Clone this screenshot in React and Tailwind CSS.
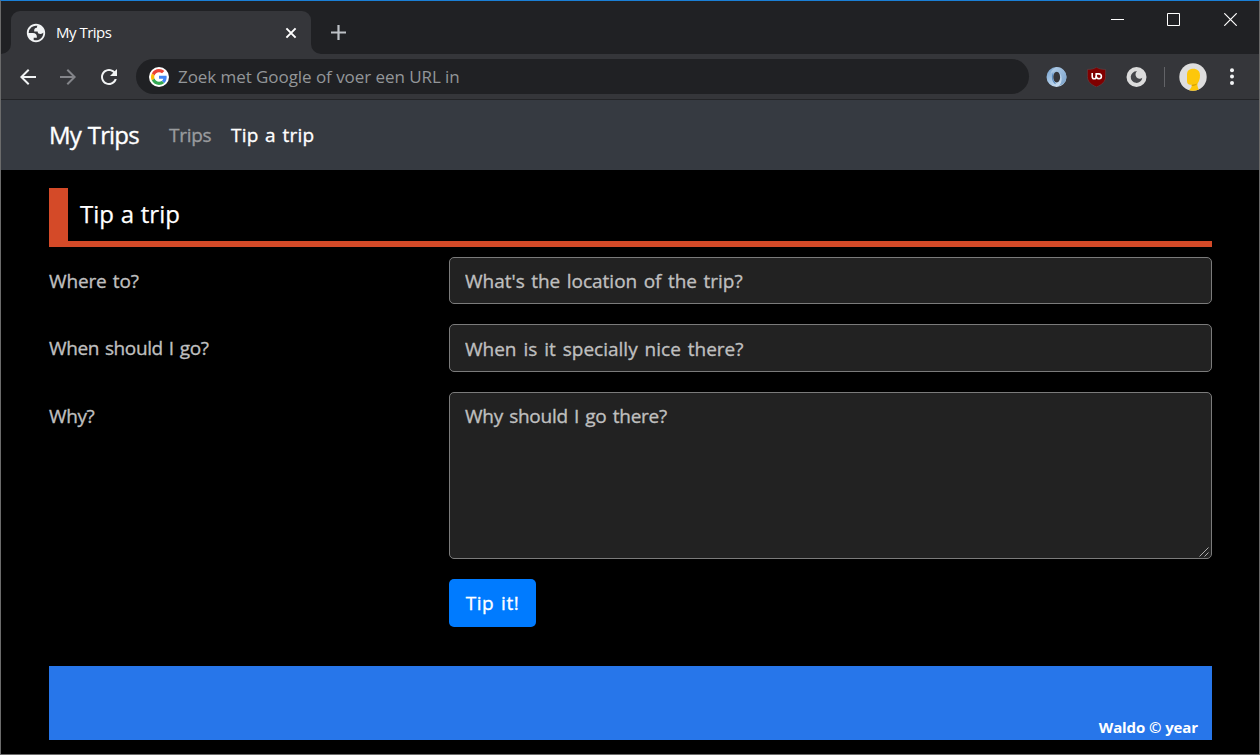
const GLOBE =
  'M12 2c5.520 0 10 4.480 10 10s-4.480 10-10 10S2 17.520 2 12 6.480 2 12 2zM4 12h4.400c3.407.022 4.922 1.730 4.543 5.127H9.488v2.470a8.004 8.004 0 0 0 10.498-8.083C19.327 12.504 18.332 13 17 13c-2.137 0-3.206-.916-3.206-2.750h-3.748c-.274-2.728.683-4.092 2.870-4.092 0-.975.327-1.597.811-1.970A8.004 8.004 0 0 0 4 12z';

function TabStrip() {
  return (
    <div className="flex h-[53px] items-end bg-[#202124]">
      <svg className="h-2.5 w-2.5" viewBox="0 0 10 10">
        <path d="M10 0V10H0A10 10 0 0 0 10 0Z" fill="#35363a" />
      </svg>
      <div className="flex h-[43px] w-[300px] items-center rounded-t-[9px] bg-[#35363a] pr-3.5 pl-3.5">
        <svg className="size-[22px]" viewBox="0 0 24 24" fill="#f1f3f4">
          <path fillRule="evenodd" d={GLOBE} />
        </svg>
        <span className="ml-[9px] flex-1 font-['Open_Sans',sans-serif] text-[15px] tracking-[-0.5px] text-white">My Trips</span>
        <svg className="size-3" viewBox="0 0 12 12" stroke="#fff" strokeWidth="2">
          <path d="M1.400 1.400 10.600 10.600M10.600 1.400 1.400 10.600" />
        </svg>
      </div>
      <svg className="h-2.5 w-2.5" viewBox="0 0 10 10">
        <path d="M0 0V10H10A10 10 0 0 1 0 0Z" fill="#35363a" />
      </svg>
      <svg className="mb-3.5 ml-[10px] size-[15px]" viewBox="0 0 15 15" stroke="#bdc1c6" strokeWidth="2.2">
        <path d="M7.500 0V15M0 7.500H15" />
      </svg>
      <div className="ml-auto flex h-full items-start pt-3 pr-[22px]">
        <svg className="mr-[43px] size-[13px]" viewBox="0 0 13 13" fill="none" stroke="#fff">
          <path d="M0 6.500H13" />
        </svg>
        <svg className="mr-[44px] size-[13px]" viewBox="0 0 13 13" fill="none" stroke="#fff">
          <path d="M.5 .5H12.500V12.500H.5Z" />
        </svg>
        <svg className="size-[13px]" viewBox="0 0 13 13" fill="none" stroke="#fff" strokeWidth="1.2">
          <path d="M.3 .3 12.700 12.700M12.700 .3 .3 12.700" />
        </svg>
      </div>
    </div>
  );
}

function GoogleMark() {
  return (
    <span className="flex size-5 items-center justify-center rounded-full bg-white">
      <svg className="size-4" viewBox="0 0 48 48">
        <path fill="#EA4335" d="M24 9.5c3.54 0 6.71 1.22 9.21 3.6l6.85-6.85C35.9 2.38 30.47 0 24 0 14.62 0 6.51 5.38 2.56 13.22l7.98 6.19C12.43 13.72 17.74 9.5 24 9.5z" />
        <path fill="#4285F4" d="M46.98 24.55c0-1.57-.15-3.09-.38-4.55H24v9.02h12.94c-.58 2.96-2.26 5.48-4.78 7.18l7.73 6c4.51-4.18 7.09-10.36 7.09-17.65z" />
        <path fill="#FBBC05" d="M10.53 28.59c-.48-1.45-.76-2.99-.76-4.59s.27-3.14.76-4.59l-7.98-6.19C.92 16.46 0 20.12 0 24c0 3.88.92 7.54 2.56 10.78l7.97-6.19z" />
        <path fill="#34A853" d="M24 48c6.48 0 11.93-2.13 15.89-5.81l-7.73-6c-2.15 1.45-4.92 2.3-8.16 2.3-6.26 0-11.57-4.22-13.47-9.91l-7.98 6.19C6.51 42.62 14.62 48 24 48z" />
      </svg>
    </span>
  );
}

function Toolbar() {
  return (
    <div className="flex h-[46px] items-center border-b border-[#232427] bg-[#35363a] pl-[15px]">
      <svg className="size-6" viewBox="0 0 24 24" fill="#f1f3f4">
        <path d="M20 11H7.83l5.59-5.59L12 4l-8 8 8 8 1.41-1.41L7.83 13H20v-2z" />
      </svg>
      <svg className="ml-4 size-6" viewBox="0 0 24 24" fill="#84858a">
        <path d="m12 4-1.410 1.410L16.170 11H4v2h12.170l-5.580 5.590L12 20l8-8z" />
      </svg>
      <svg className="ml-[17px] size-6" viewBox="0 0 24 24" fill="#f1f3f4">
        <path d="M17.65 6.35C16.2 4.9 14.21 4 12 4c-4.42 0-7.99 3.58-7.99 8s3.57 8 7.99 8c3.73 0 6.84-2.55 7.73-6h-2.08c-.82 2.33-3.04 4-5.65 4-3.31 0-6-2.69-6-6s2.69-6 6-6c1.66 0 3.14.69 4.22 1.78L13 11h7V4l-2.35 2.35z" />
      </svg>
      <div className="ml-[15px] flex h-[35px] w-[893px] items-center rounded-full bg-[#202124] pl-[13px]">
        <GoogleMark />
        <span className="ml-[9px] font-['Open_Sans',sans-serif] text-[17px] tracking-[-0.06px] text-[#939699]">
          Zoek met Google of voer een URL in
        </span>
      </div>
      <svg className="ml-[17px] h-5 w-[21px]" viewBox="-.5 0 21 20">
        <defs>
          <linearGradient id="ringLight" x1="0" y1="0" x2="1" y2="1">
            <stop offset="0" stopColor="#6f9dcb" />
            <stop offset=".45" stopColor="#a9c8e6" />
            <stop offset="1" stopColor="#e4eef8" />
          </linearGradient>
          <linearGradient id="ringDark" x1="0" y1="0" x2="1" y2="1">
            <stop offset="0" stopColor="#c9def1" />
            <stop offset="1" stopColor="#5586b9" />
          </linearGradient>
        </defs>
        <path fillRule="evenodd" fill="url(#ringLight)" d="M10 0a10 10 0 1 1 0 20a10 10 0 0 1 0-20ZM10.300 4.700C8 4.700 6.800 7.500 6.800 10.200s1.200 5.200 3.400 5.200 3.400-2.600 3.400-5.200S12.500 4.700 10.300 4.700Z" />
        <path fill="url(#ringDark)" d="M10 0C16 0 20 5 20 10S16 18.500 12 19C16 16 16 9 13.200 6 11.500 3.600 7 3.500 4 7 5 3 7 1 10 0Z" opacity=".75" />
        <path fill="none" stroke="#5a8abd" strokeWidth="1.100" d="M6.600 6.500C5 10 6 14.500 9 16.800" />
      </svg>
      <svg className="ml-[19px] h-5 w-[21px]" viewBox="-.5 0 21 20">
        <path d="M10 .2C7.500 2 4.500 2.400 .9 2.400V9.500C.9 14.500 4.500 17.700 10 20 15.500 17.700 19.100 14.500 19.100 9.500V2.400C15.500 2.400 12.500 2 10 .2Z" fill="#800000" stroke="#5c4649" strokeWidth=".6" />
        <path d="M5.700 6.100V9.400Q5.700 11.700 7.700 11.700T9.700 9.400V6.100" fill="none" stroke="#fff" strokeWidth="1.600" />
        <path d="M9.700 6.900H12.500a2.400 2.400 0 0 1 0 4.800q-2.800 0-2.800-2.600" fill="none" stroke="#fff" strokeWidth="1.600" />
      </svg>
      <svg className="ml-[19px] h-5 w-[21px]" viewBox="-.5 0 21 20">
        <circle cx="10" cy="10" r="10" fill="#dcdcdc" />
        <path d="M10.500 4.300A5.800 5.800 0 1 0 15.800 10.700A3.600 3.600 0 1 1 10.500 4.300Z" fill="#45464a" />
      </svg>
      <div className="ml-[17px] h-5 w-px bg-[#626367]" />
      <svg className="ml-3.5 size-7" viewBox="0 0 28 28">
        <defs>
          <clipPath id="avatar">
            <circle cx="14" cy="14" r="13.700" />
          </clipPath>
        </defs>
        <g clipPath="url(#avatar)">
          <path d="M0 0H28V28H0Z" fill="#dedede" />
          <path d="M8 12C8 7 11 5.800 14.500 5.800S21 8 21 12.500C21 16 20 18.500 18.500 20.500 18 23 19 25 20.500 28H9C11.500 26 13 24 12.800 21.700 9 22 8 20.500 8 18Z" fill="#fdc70c" />
          <path d="M12.800 21.700C15 21.500 17 21 18.500 20.500 17 22.500 15 23 12.700 23Z" fill="#d9a400" />
        </g>
      </svg>
      <svg className="ml-[13px] h-5 w-5" viewBox="0 0 20 20" fill="#f1f3f4">
        <circle cx="12" cy="3.200" r="2" />
        <circle cx="12" cy="9.600" r="2" />
        <circle cx="12" cy="16" r="2" />
      </svg>
    </div>
  );
}

function NavBar() {
  return (
    <nav className="flex h-[70px] items-center bg-[#363a41] pl-12 text-[19px] [-webkit-text-stroke:0.35px]">
      <span className="w-[120px] text-2xl tracking-[-0.85px] whitespace-nowrap text-white [word-spacing:1.500px]">My Trips</span>
      <a className="w-[62px] tracking-[-0.3px] text-[#999b9e]">Trips</a>
      <a className="[word-spacing:1.500px] tracking-[0.2px] text-white">Tip a trip</a>
    </nav>
  );
}

const control =
  'block w-full rounded-[5px] border border-[#7b7b7b] bg-[#222] px-[15px] text-[19px] text-white outline-none [-webkit-text-stroke:0.35px] placeholder:text-[#bfbfbf]';

function Row({ label, labelClass, children }) {
  return (
    <div className="mb-5 flex items-start">
      <label className={'w-[400px] shrink-0 text-[19px] leading-[30px] text-[#bfbfbf] [-webkit-text-stroke:0.35px] [word-spacing:1.500px] ' + labelClass}>{label}</label>
      <div className="relative flex-1">{children}</div>
    </div>
  );
}

function TipForm() {
  return (
    <form className="mt-2.5">
      <Row label="Where to?" labelClass="pt-[9px] tracking-[-0.15px]">
        <input className={control + ' h-[47px] [word-spacing:1.500px]'} placeholder="What's the location of the trip?" />
      </Row>
      <Row label="When should I go?" labelClass="pt-[9px] tracking-[-0.4px]">
        <input className={control + ' h-12 pt-0.5 [word-spacing:2px]'} placeholder="When is it specially nice there?" />
      </Row>
      <Row label="Why?" labelClass="pt-[9px] tracking-[-0.4px]">
        <textarea className={control + ' h-[167px] resize-none py-2 leading-[30px] tracking-[-0.25px] [word-spacing:1.500px]'} placeholder="Why should I go there?" />
        <svg className="absolute right-[3px] bottom-[2px] size-2.5" viewBox="0 0 10 10" stroke="#bdbdbd" strokeWidth=".9">
          <path d="M.5 9.500 9.500 .5M5.500 9.500 9.500 5.500" />
        </svg>
      </Row>
      <div className="pl-[400px]">
        <button type="button" className="block h-12 w-[87px] rounded-[5px] bg-[#007bff] text-[19px] tracking-[0.5px] text-white [-webkit-text-stroke:0.35px] [word-spacing:1.500px]">Tip it!</button>
      </div>
    </form>
  );
}

export default function App() {
  return (
    <div className="flex h-[755px] w-[1260px] flex-col overflow-hidden border border-t-[#1a7fd6] border-r-[#6b6b6b] border-b-[#6b6b6b] border-l-[#6b6b6b] bg-black font-['Open_Sans','Noto_Sans',sans-serif]">
      <TabStrip />
      <Toolbar />
      <NavBar />
      <main className="mt-[18px] mr-[47px] ml-12">
        <div className="flex h-[59px] border-b-[6px] border-[#d44a28]">
          <div className="w-[19px] bg-[#d44a28]" />
          <h1 className="pl-3 text-2xl leading-[51px] text-white [-webkit-text-stroke:0.25px] [word-spacing:0.500px]">Tip a trip</h1>
        </div>
        <TipForm />
      </main>
      <footer className="mt-[39px] mr-[47px] ml-12 flex h-[74px] items-end justify-end bg-[#2776ea] pr-3.5 pb-px text-[15px] leading-6 font-bold text-white">
        <span className="tracking-[-0.1px]">Waldo © year</span>
      </footer>
    </div>
  );
}
